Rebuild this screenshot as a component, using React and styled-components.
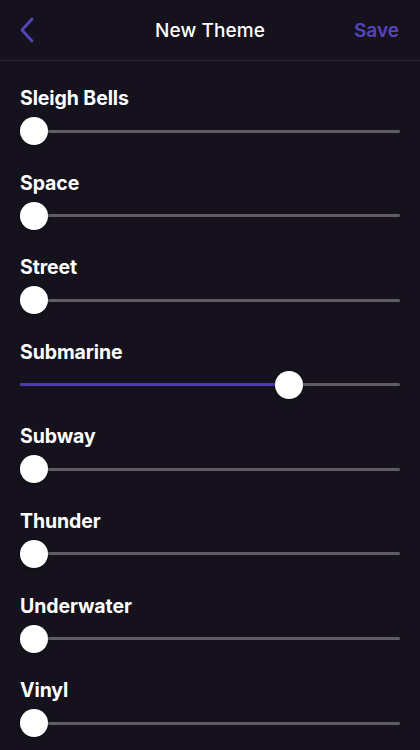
import React from "react";
import styled, { createGlobalStyle } from "styled-components";

const GlobalStyle = createGlobalStyle`
  body {
    margin: 0;
    background: #15121d;
    font-family: Inter, "Liberation Sans", Arial, sans-serif;
    -webkit-font-smoothing: antialiased;
  }
`;

const Screen = styled.div`
  width: 420px;
  height: 750px;
  background: #15121d;
  overflow: hidden;
`;

const Header = styled.div`
  height: 60px;
  display: grid;
  grid-template-columns: 80px 1fr 80px;
  align-items: center;
  border-bottom: 1px solid #26232e;
`;

const BackButton = styled.div`
  display: flex;
  align-items: center;
  padding-left: 19px;
  height: 100%;
`;

const Title = styled.div`
  text-align: center;
  color: #ffffff;
  font-size: 19px;
  font-weight: 500;
  letter-spacing: 0.1px;
`;

const SaveButton = styled.div`
  text-align: right;
  padding-right: 21px;
  color: #5744bd;
  font-size: 19px;
  font-weight: 600;
`;

const List = styled.div`
  display: flex;
  flex-direction: column;
  gap: 25.6px;
  padding: 25px 20px 0;
`;

const Row = styled.div`
  display: flex;
  flex-direction: column;
  gap: 7px;
`;

const Label = styled.div`
  color: #ffffff;
  font-size: 19.5px;
  font-weight: 700;
  line-height: 24px;
  letter-spacing: -0.1px;
`;

const SliderBox = styled.div`
  position: relative;
  height: 28px;
  display: flex;
  align-items: center;
`;

const Track = styled.div`
  width: 100%;
  height: 3px;
  border-radius: 2px;
  background: #5f5c66;
  position: relative;
`;

const Fill = styled.div`
  position: absolute;
  left: 0;
  top: 0;
  height: 3px;
  border-radius: 2px;
  background: #4e3bb0;
`;

const Thumb = styled.div`
  position: absolute;
  top: 0;
  width: 28px;
  height: 28px;
  border-radius: 50%;
  background: #ffffff;
  box-shadow: 0 1px 3px rgba(0, 0, 0, 0.35);
`;

const TRACK = 380;
const THUMB = 28;

const Slider = ({ value }) => {
  const left = value * (TRACK - THUMB);
  return (
    <SliderBox>
      <Track>
        <Fill style={{ width: left + THUMB / 2 }} />
      </Track>
      <Thumb style={{ left }} />
    </SliderBox>
  );
};

const sounds = [
  { name: "Sleigh Bells", value: 0 },
  { name: "Space", value: 0 },
  { name: "Street", value: 0 },
  { name: "Submarine", value: 0.724 },
  { name: "Subway", value: 0 },
  { name: "Thunder", value: 0 },
  { name: "Underwater", value: 0 },
  { name: "Vinyl", value: 0 },
];

const App = () => {
  return (
    <Screen>
      <GlobalStyle />
      <Header>
        <BackButton>
          <svg width="16" height="26" viewBox="0 0 16 26">
            <path
              d="M13 2 L3 13 L13 24"
              fill="none"
              stroke="#5744bd"
              strokeWidth="2.8"
              strokeLinecap="round"
              strokeLinejoin="round"
            />
          </svg>
        </BackButton>
        <Title>New Theme</Title>
        <SaveButton>Save</SaveButton>
      </Header>
      <List>
        {sounds.map((s) => (
          <Row key={s.name}>
            <Label>{s.name}</Label>
            <Slider value={s.value} />
          </Row>
        ))}
      </List>
    </Screen>
  );
};

export default App;
